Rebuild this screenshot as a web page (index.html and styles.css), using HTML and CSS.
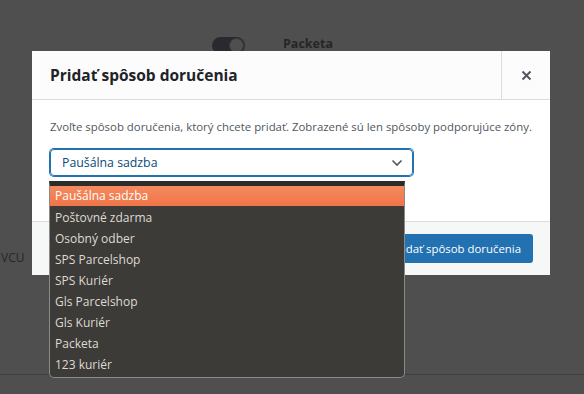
FILE: index.html
```html
<!DOCTYPE html>
<html>
<head>
    <title>Pridať spôsob doručenia</title>
    <link rel="stylesheet" href="styles.css">
</head>
<body>
    <div class="page">
        <div class="method-row">
            <span class="toggle"><span class="knob"></span></span>
            <span class="method-name">Packeta</span>
        </div>
        <div class="side-label">VCU</div>
        <div class="page-rule"></div>
    </div>

    <div class="modal">
        <div class="modal-head">
            <h1>Pridať spôsob doručenia</h1>
            <button class="close" aria-label="Zavrieť">
                <svg width="11" height="11" viewBox="0 0 11 11"><path d="M1.5 1.5 L9.5 9.5 M9.5 1.5 L1.5 9.5" stroke="#50575e" stroke-width="2"/></svg>
            </button>
        </div>
        <div class="modal-body">
            <p class="hint">Zvoľte spôsob doručenia, ktorý chcete pridať. Zobrazené sú len spôsoby podporujúce zóny.</p>
            <div class="select">
                <span>Paušálna sadzba</span>
                <svg width="12" height="8" viewBox="0 0 12 8"><path d="M1.5 1.5 L6 6 L10.5 1.5" fill="none" stroke="#50575e" stroke-width="1.6"/></svg>
            </div>
        </div>
        <div class="modal-foot">
            <button class="primary">Pridať spôsob doručenia</button>
        </div>
    </div>

    <ul class="dropdown">
        <li class="active">Paušálna sadzba</li>
        <li>Poštovné zdarma</li>
        <li>Osobný odber</li>
        <li>SPS Parcelshop</li>
        <li>SPS Kuriér</li>
        <li>Gls Parcelshop</li>
        <li>Gls Kuriér</li>
        <li>Packeta</li>
        <li>123 kuriér</li>
    </ul>
</body>
</html>
```

FILE: styles.css
```css
body {
    margin: 0;
    background-color: #4f4f4f;
    font-family: "Open Sans", "Noto Sans", sans-serif;
    width: 584px;
    height: 394px;
    overflow: hidden;
    position: relative;
}

.page {
    height: 394px;
    display: flex;
    flex-direction: column;
}

.method-row {
    display: flex;
    align-items: center;
    padding: 37px 0 0 212px;
    gap: 38px;
}

.toggle {
    width: 33px;
    height: 17px;
    border-radius: 9px;
    background-color: #2b2930;
    position: relative;
    box-sizing: border-box;
}

.knob {
    position: absolute;
    right: 1px;
    top: 1px;
    width: 13px;
    height: 13px;
    border-radius: 50%;
    background-color: #4f4f4f;
    border: 1px solid #3b3b3b;
}

.method-name {
    font-size: 12.5px;
    font-weight: bold;
    color: #262626;
    margin-top: -4px;
}

.side-label {
    font-size: 12px;
    color: #262626;
    margin-top: 195px;
    margin-left: 1px;
}

.page-rule {
    margin-top: 108px;
    height: 1px;
    background-color: #3e3e3e;
}

.modal {
    position: absolute;
    left: 32px;
    top: 51px;
    width: 518px;
    height: 224px;
    background-color: #fff;
    display: flex;
    flex-direction: column;
}

.modal-head {
    height: 48px;
    background-color: #fcfcfc;
    border-bottom: 1px solid #dcdcde;
    display: flex;
    align-items: center;
}

.modal-head h1 {
    flex: 1;
    margin: 0;
    padding-left: 18px;
    font-size: 15.5px;
    font-weight: bold;
    color: #1d2327;
}

.close {
    width: 49px;
    height: 48px;
    border: none;
    border-left: 1px solid #dcdcde;
    background: none;
    display: flex;
    align-items: center;
    justify-content: center;
    padding: 0;
}

.modal-body {
    height: 121px;
    padding: 0 18px;
}

.hint {
    margin: 19px 0 0;
    font-size: 11.4px;
    color: #50575e;
    white-space: nowrap;
}

.select {
    margin-top: 15px;
    width: 363px;
    height: 27px;
    box-sizing: border-box;
    border: 1px solid #2271b1;
    box-shadow: 0 0 0 1px #2271b1;
    border-radius: 4px;
    display: flex;
    align-items: center;
    justify-content: space-between;
    padding: 0 9px 0 11px;
    font-size: 12.3px;
    color: #0a4b78;
}

.modal-foot {
    flex: 1;
    background-color: #f6f7f7;
    border-top: 1px solid #dcdcde;
    display: flex;
    align-items: center;
    justify-content: flex-end;
    padding-right: 17px;
}

.primary {
    height: 29px;
    padding: 0 12px;
    background-color: #2271b1;
    color: #fff;
    border: none;
    border-radius: 3px;
    font-family: inherit;
    font-size: 11.4px;
}

.dropdown {
    position: absolute;
    left: 49px;
    top: 181px;
    width: 356px;
    height: 197px;
    box-sizing: border-box;
    margin: 0;
    padding: 4px 0 0;
    list-style: none;
    background-color: #3d3b37;
    border: 1px solid #8b8a86;
    border-top: 5px solid #2e2c2a;
    border-radius: 0 0 5px 5px;
}

.dropdown li {
    height: 21px;
    line-height: 21px;
    padding-left: 5px;
    font-size: 12px;
    color: #dedad3;
}

.dropdown li.active {
    height: 20px;
    line-height: 19px;
    margin-top: -4px;
    background: linear-gradient(#f58a5f, #f07548);
    color: #fff;
}

.dropdown li:nth-child(2) {
    margin-top: 1px;
}
```
